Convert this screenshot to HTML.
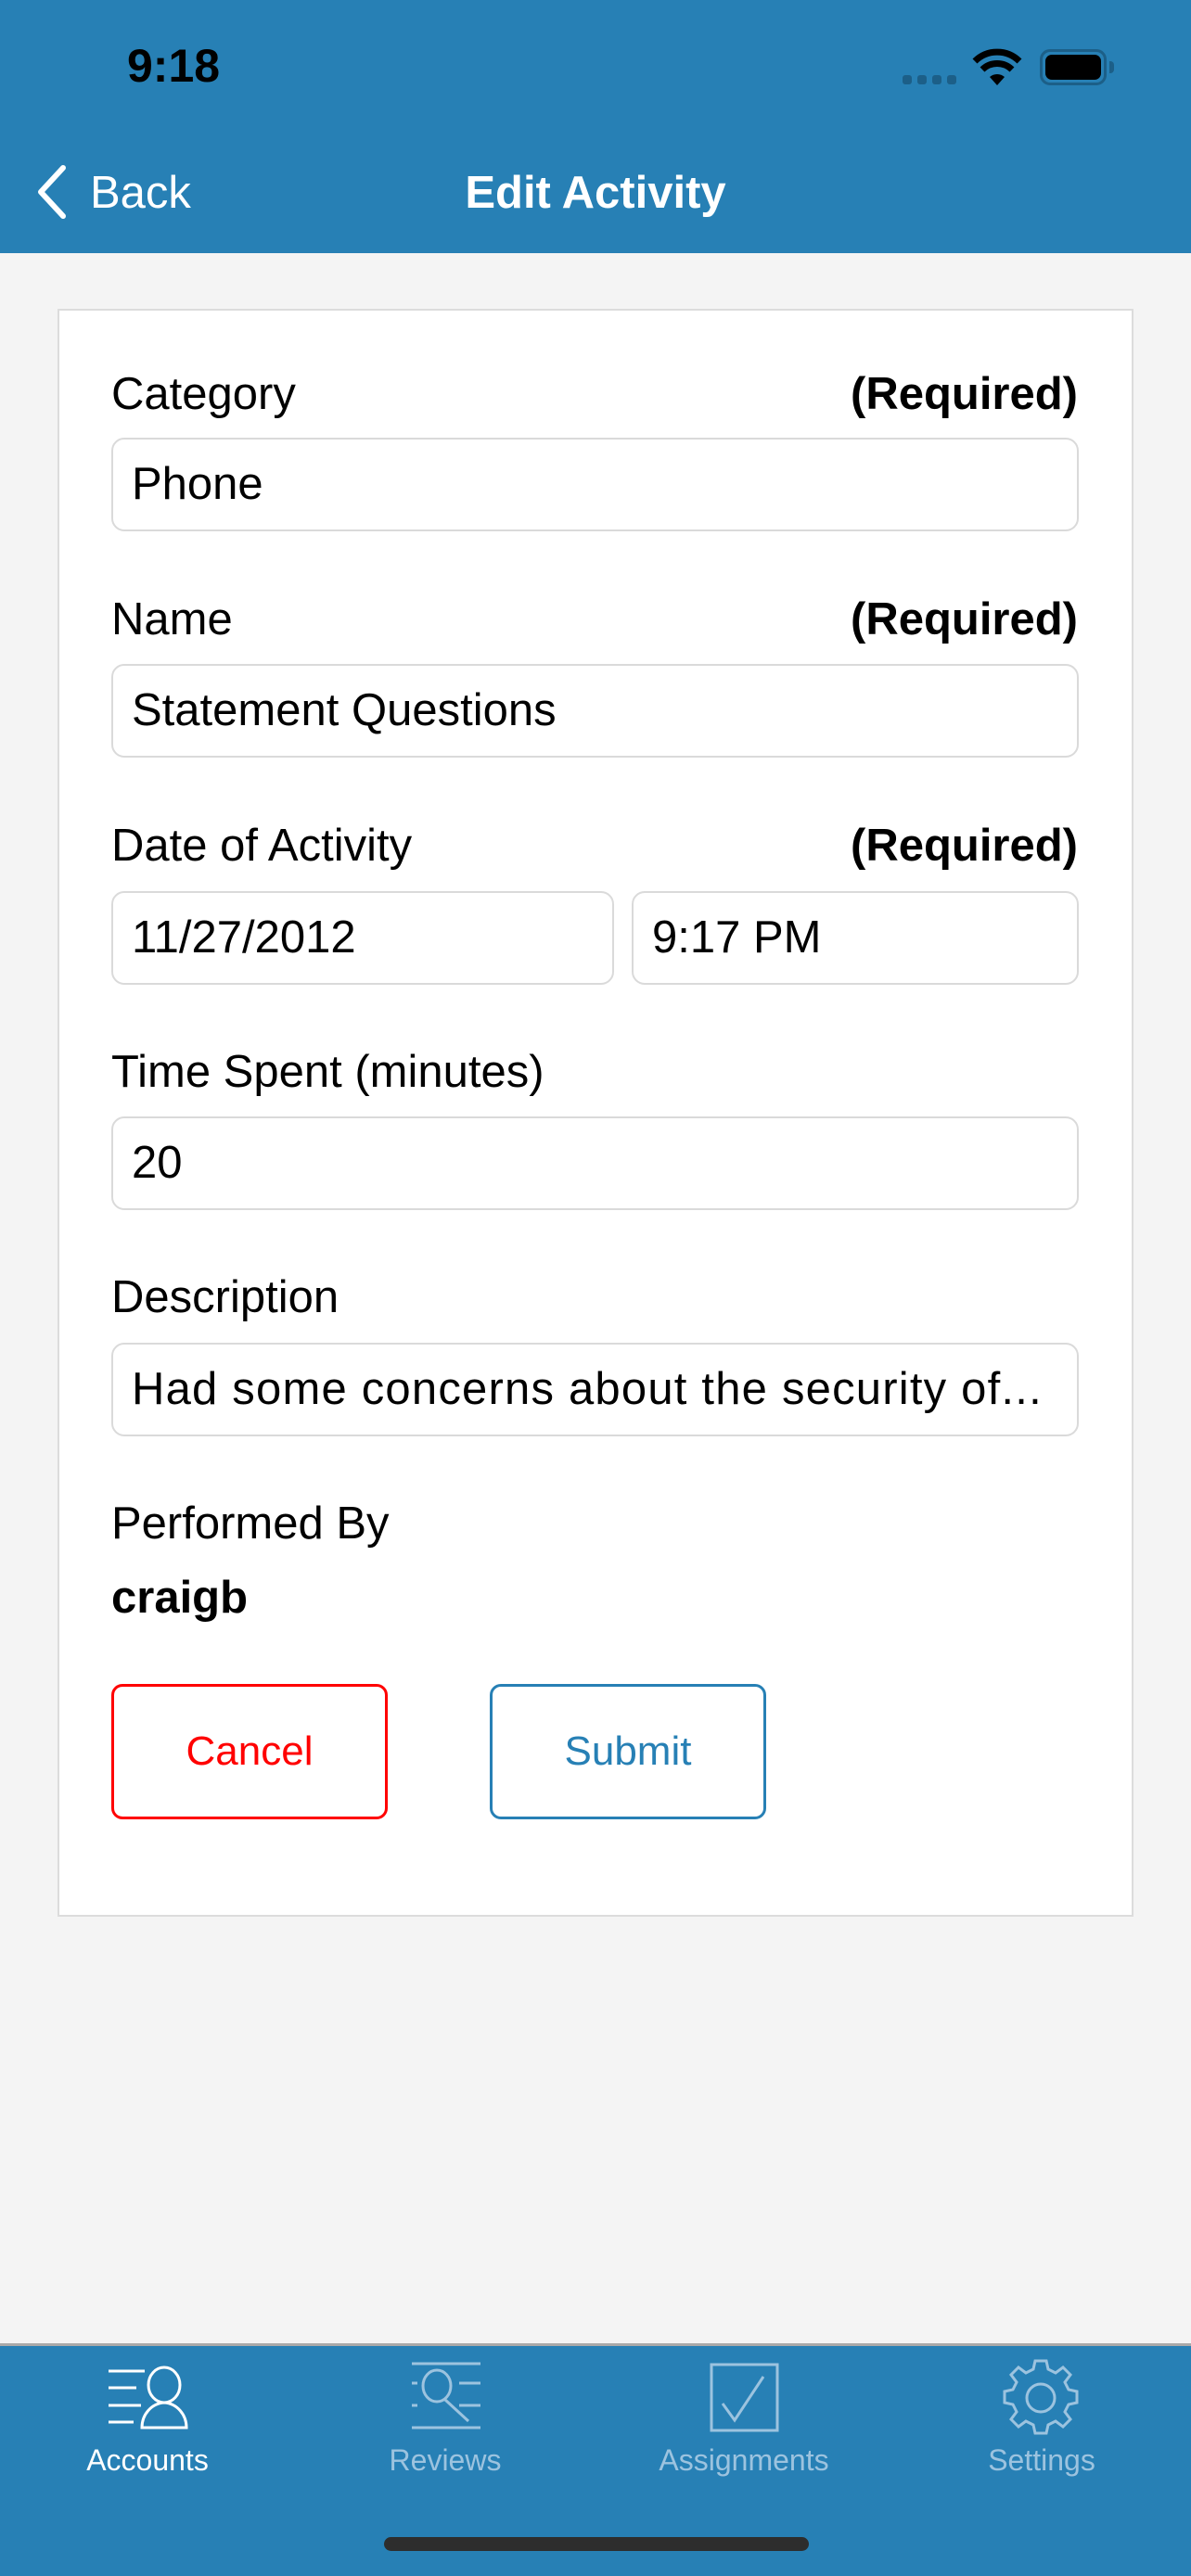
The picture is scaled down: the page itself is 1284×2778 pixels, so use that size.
<!DOCTYPE html>
<html><head><meta charset="utf-8"><style>
*{margin:0;padding:0;box-sizing:border-box}
body{width:1284px;height:2778px;background:#f4f4f4;position:relative;overflow:hidden;font-family:"Liberation Sans",sans-serif;color:#000}
.a{position:absolute}
.hdr{left:0;top:0;width:1284px;height:273px;background:#2780b5}
.card{left:62px;top:333px;width:1160px;height:1734px;background:#fff;border:2px solid #dcdcdc}
.lbl{font-size:49px;line-height:56px}
.req{font-size:49px;line-height:56px;font-weight:bold;right:122px}
.inp{background:#fff;border:2px solid #dadada;border-radius:14px;font-size:49px;line-height:96px;padding-left:20px;white-space:nowrap;overflow:hidden}
.btn{width:298px;height:146px;border:3px solid;border-radius:12px;font-size:44px;text-align:center;line-height:140px;background:#fff}
.tab{left:0;top:2527px;width:1284px;height:251px;background:#2780b5;border-top:3px solid #a9a9a9}
.tl{font-size:32px;text-align:center;width:240px;top:2635px}
</style></head><body>
<div class="a hdr"></div>
<div class="a" style="left:137px;top:41px;font-size:50px;font-weight:bold;line-height:60px">9:18</div>
<div class="a" style="left:973px;top:81px;width:10px;height:10px;border-radius:3px;background:#1c5f88"></div>
<div class="a" style="left:989px;top:81px;width:10px;height:10px;border-radius:3px;background:#1c5f88"></div>
<div class="a" style="left:1005px;top:81px;width:10px;height:10px;border-radius:3px;background:#1c5f88"></div>
<div class="a" style="left:1021px;top:81px;width:10px;height:10px;border-radius:3px;background:#1c5f88"></div>
<svg class="a" style="left:1048px;top:52px" width="54" height="42" viewBox="0 0 54 42"><path d="M27 40 L19 31 A12 12 0 0 1 35 31 Z" fill="#000"/><path d="M11 23 A23 23 0 0 1 43 23" stroke="#000" stroke-width="7" fill="none"/><path d="M3 14 A34 34 0 0 1 51 14" stroke="#000" stroke-width="7" fill="none"/></svg>
<div class="a" style="left:1121px;top:53px;width:72px;height:39px;border:3px solid #1c5f88;border-radius:11px;padding:3px"><div style="width:100%;height:100%;background:#000;border-radius:7px"></div></div>
<div class="a" style="left:1196px;top:66px;width:5px;height:13px;background:#1c5f88;border-radius:0 4px 4px 0"></div>
<svg class="a" style="left:36px;top:176px" width="40" height="62" viewBox="0 0 40 62"><path d="M32 5 L8 31 L32 57" stroke="#fff" stroke-width="6" fill="none" stroke-linecap="round" stroke-linejoin="round"/></svg>
<div class="a" style="left:97px;top:178px;font-size:49px;line-height:60px;color:#fff">Back</div>
<div class="a" style="left:342px;top:178px;width:600px;text-align:center;font-size:49px;line-height:60px;color:#fff;font-weight:bold">Edit Activity</div>

<div class="a card"></div>
<div class="a lbl" style="left:120px;top:397px">Category</div><div class="a req" style="top:397px">(Required)</div>
<div class="a inp" style="left:120px;top:472px;width:1043px;height:101px">Phone</div>
<div class="a lbl" style="left:120px;top:640px">Name</div><div class="a req" style="top:640px">(Required)</div>
<div class="a inp" style="left:120px;top:716px;width:1043px;height:101px">Statement Questions</div>
<div class="a lbl" style="left:120px;top:884px">Date of Activity</div><div class="a req" style="top:884px">(Required)</div>
<div class="a inp" style="left:120px;top:961px;width:542px;height:101px">11/27/2012</div>
<div class="a inp" style="left:681px;top:961px;width:482px;height:101px">9:17 PM</div>
<div class="a lbl" style="left:120px;top:1128px">Time Spent (minutes)</div>
<div class="a inp" style="left:120px;top:1204px;width:1043px;height:101px">20</div>
<div class="a lbl" style="left:120px;top:1371px">Description</div>
<div class="a inp" style="left:120px;top:1448px;width:1043px;height:101px;letter-spacing:1.2px">Had some concerns about the security of...</div>
<div class="a lbl" style="left:120px;top:1615px">Performed By</div>
<div class="a lbl" style="left:120px;top:1695px;font-weight:bold">craigb</div>
<div class="a btn" style="left:120px;top:1816px;border-color:#f00;color:#f00">Cancel</div>
<div class="a btn" style="left:528px;top:1816px;border-color:#2780b5;color:#2780b5">Submit</div>

<div class="a tab"></div>
<svg class="a" style="left:0;top:2527px" width="1284" height="251" viewBox="0 2527 1284 251" fill="none" stroke-width="3">
<g stroke="#fff">
<path d="M117 2557h39M117 2575h30M117 2594h35M117 2612h27"/>
<ellipse cx="177" cy="2572" rx="17" ry="19"/>
<path d="M153 2618 C153 2604 163 2592 177 2591 C191 2592 201 2604 201 2618 Z"/>
</g>
<g stroke="#9cc3df">
<path d="M444 2549h74M444 2618h74M444 2570h6M495 2570h23M444 2594h6M495 2594h23"/>
<ellipse cx="471" cy="2573" rx="15" ry="17"/>
<path d="M480 2588 L505 2611"/>
<rect x="767" y="2550" width="71" height="71"/>
<path d="M779 2592 L792 2610 L823 2563"/>
<circle cx="1122" cy="2586" r="15"/>
<path d="M1116 2546h12l2 9 8 4 8-6 8 8-6 8 4 8 9 2v12l-9 2-4 8 6 8-8 8-8-6-8 4-2 9h-12l-2-9-8-4-8 6-8-8 6-8-4-8-9-2v-12l9-2 4-8-6-8 8-8 8 6 8-4z"/>
</g>
</svg>
<div class="a tl" style="left:39px;color:#fff">Accounts</div>
<div class="a tl" style="left:360px;color:#9cc3df">Reviews</div>
<div class="a tl" style="left:682px;color:#9cc3df">Assignments</div>
<div class="a tl" style="left:1003px;color:#9cc3df">Settings</div>
<div class="a" style="left:414px;top:2736px;width:458px;height:15px;border-radius:8px;background:#2d2d2d"></div>
</body></html>
